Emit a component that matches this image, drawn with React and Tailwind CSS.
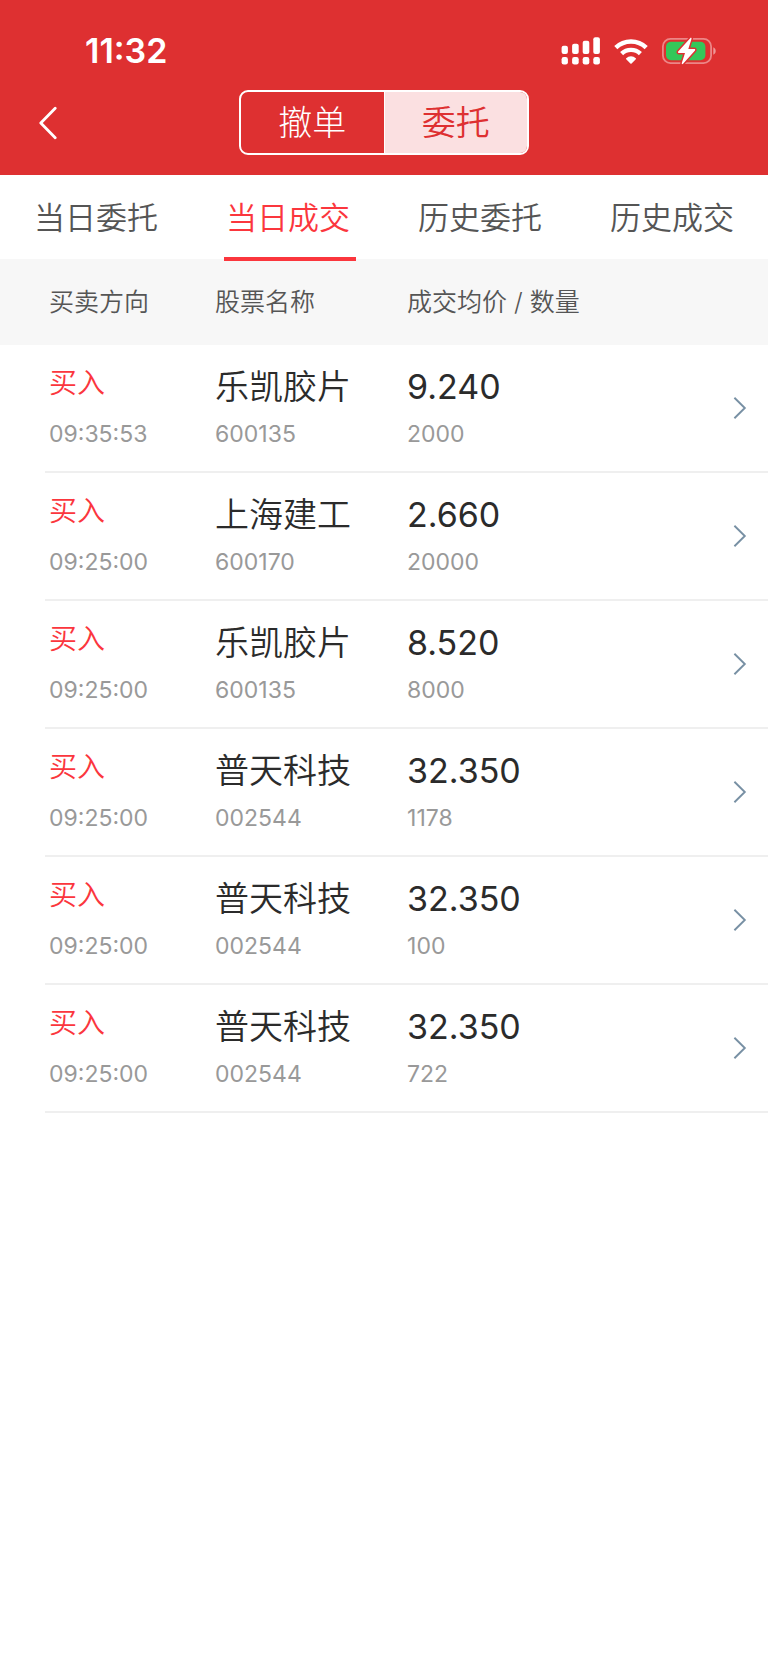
import { useState } from "react";

const TABS = ["当日委托", "当日成交", "历史委托", "历史成交"];

const TRADES = [
  { side: "买入", time: "09:35:53", name: "乐凯胶片", code: "600135", price: "9.240", qty: "2000" },
  { side: "买入", time: "09:25:00", name: "上海建工", code: "600170", price: "2.660", qty: "20000" },
  { side: "买入", time: "09:25:00", name: "乐凯胶片", code: "600135", price: "8.520", qty: "8000" },
  { side: "买入", time: "09:25:00", name: "普天科技", code: "002544", price: "32.350", qty: "1178" },
  { side: "买入", time: "09:25:00", name: "普天科技", code: "002544", price: "32.350", qty: "100" },
  { side: "买入", time: "09:25:00", name: "普天科技", code: "002544", price: "32.350", qty: "722" },
];

function SignalIcon() {
  return (
    <svg width="39" height="28" viewBox="0 0 39 28" fill="#fff" aria-hidden="true">
      <rect x="0.6" y="8.7" width="6.3" height="8.3" rx="2" />
      <rect x="11.1" y="6.7" width="6.6" height="10.3" rx="2" />
      <rect x="21.7" y="3.7" width="6.6" height="13.3" rx="2" />
      <rect x="32.3" y="0.3" width="6.6" height="16.7" rx="2" />
      <rect x="0.6" y="20" width="6.3" height="7.5" rx="2.2" />
      <rect x="11.1" y="20" width="6.6" height="7.5" rx="2.2" />
      <rect x="21.7" y="20" width="6.6" height="7.5" rx="2.2" />
      <rect x="32.3" y="20" width="6.6" height="7.5" rx="2.2" />
    </svg>
  );
}

function WifiIcon() {
  return (
    <svg width="34" height="26" viewBox="0 0 34 26" aria-hidden="true">
      <g fill="none" stroke="#fff" strokeWidth="4.4">
        <path d="M1.8 9.6a21.8 21.8 0 0 1 30.4 0" />
        <path d="M7.6 15.6a13.6 13.6 0 0 1 18.8 0" />
      </g>
      <path d="M12.2 20.2a7 7 0 0 1 9.6 0c.3.3.3.7 0 1l-4.2 4.2c-.4.3-.8.3-1.2 0l-4.2-4.2c-.3-.3-.3-.7 0-1Z" fill="#fff" />
    </svg>
  );
}

function BatteryIcon() {
  return (
    <svg width="54" height="28" viewBox="0 0 54 28" aria-hidden="true">
      <rect x="0.9" y="1.9" width="48.2" height="24.2" rx="7.6" fill="none" stroke="#fff" strokeOpacity="0.42" strokeWidth="1.8" />
      <path d="M51.3 10.3c1.5.7 2.4 2 2.4 3.7s-.9 3-2.4 3.7Z" fill="#fff" fillOpacity="0.5" />
      <rect x="4" y="4.8" width="39.4" height="18.4" rx="5" fill="#34c759" />
      <path
        d="M28.2 1.2 16.2 14.6c-.5.6-.2 1.3.6 1.3h6.2l-3.2 10.2c-.3 1 .6 1.4 1.3.7L33 13.4c.5-.6.2-1.3-.6-1.3h-6.1l3.2-10.2c.3-1-.6-1.4-1.3-.7Z"
        fill="#fff"
        stroke="#de3031"
        strokeWidth="3"
        paintOrder="stroke"
      />
    </svg>
  );
}

function Cell({ main, sub, mainClass }) {
  return (
    <td className="p-0">
      <div className="h-32 border-b-2 border-[#efefef] pt-5">
        <div className={`h-[42px] leading-11 ${mainClass}`}>{main}</div>
        <div className="mt-[11px] text-[23px] leading-8 text-[#999]">{sub}</div>
      </div>
    </td>
  );
}

export default function App() {
  const [mode, setMode] = useState("委托");
  const [tab, setTab] = useState("当日成交");

  return (
    <div className="min-h-screen bg-white font-['Inter','Noto_Sans_CJK_SC',sans-serif] text-[#2b2b2b]">
      <header className="bg-[#de3031] pb-5 text-white">
        <div className="flex h-[90px] items-center justify-between pt-3 pr-[52px] pl-[85px]">
          <span className="text-[34px] leading-10 font-semibold">11:32</span>
          <div className="flex items-center gap-[14px]">
            <SignalIcon />
            <WifiIcon />
            <BatteryIcon />
          </div>
        </div>
        <nav className="grid grid-cols-[1fr_auto_1fr] items-center">
          <button type="button" aria-label="返回" className="ml-8 flex h-12 w-8 items-center justify-center">
            <svg width="18" height="34" viewBox="0 0 18 34" fill="none" stroke="#fff" strokeWidth="2.8" strokeLinecap="round" strokeLinejoin="round">
              <path d="M16.2 2.2 1.8 17l14.4 14.8" />
            </svg>
          </button>
          <div className="flex h-[65px] w-[290px] overflow-hidden rounded-[9px] border-2 border-white">
            {["撤单", "委托"].map((m) => (
              <button
                key={m}
                type="button"
                aria-pressed={mode === m}
                onClick={() => setMode(m)}
                className={`flex-1 text-[34px] leading-10 ${
                  mode === m ? "bg-[#fbe0e1] font-[350] text-[#de3031]" : "border-r border-white font-light text-white"
                }`}
              >
                {m}
              </button>
            ))}
          </div>
        </nav>
      </header>

      <div role="tablist" className="grid h-[84px] grid-cols-4">
        {TABS.map((t) => (
          <button
            key={t}
            role="tab"
            type="button"
            aria-selected={tab === t}
            onClick={() => setTab(t)}
            className={`relative pt-0.5 text-[31px] leading-10 font-[350] ${tab === t ? "text-[#fb363d]" : "text-[#555]"}`}
          >
            {t}
            {tab === t && <span className="absolute right-7 -bottom-0.5 left-8 h-1 bg-[#fb363d]" />}
          </button>
        ))}
      </div>

      <table className="w-full table-fixed border-collapse text-left">
        <colgroup>
          <col className="w-[28%]" />
          <col className="w-[25%]" />
          <col />
          <col className="w-[10%]" />
        </colgroup>
        <thead className="bg-[#f7f7f7] text-[25px] text-[#555]">
          <tr className="h-[86px]">
            <th className="p-0 pt-0.5 pl-[49px] font-[350]">买卖方向</th>
            <th className="p-0 pt-0.5 font-[350]">股票名称</th>
            <th className="p-0 pt-0.5 font-[350]">成交均价 / 数量</th>
            <th className="p-0" aria-label="详情" />
          </tr>
        </thead>
        <tbody>
          {TRADES.map((r, i) => (
            <tr key={i}>
              <td className="p-0 pl-[45px]">
                <div className="h-32 border-b-2 border-[#efefef] pt-5 pl-1">
                  <div className="h-[42px] text-[28px] leading-9 font-[350] text-[#fb363d]">{r.side}</div>
                  <div className="mt-[11px] text-[23px] leading-8 text-[#999]">{r.time}</div>
                </div>
              </td>
              <Cell main={r.name} sub={r.code} mainClass="text-[34px] font-[350]" />
              <Cell main={r.price} sub={r.qty} mainClass="text-[34px]" />
              <td className="p-0">
                <div className="flex h-32 items-center justify-end border-b-2 border-[#efefef] pr-4">
                  <button type="button" aria-label={`${r.name} 详情`} className="flex h-12 w-6 items-center justify-center">
                    <svg width="14" height="24" viewBox="0 0 14 24" fill="none" stroke="#7890a4" strokeWidth="1.9">
                      <path d="M1.4 1.8 11.8 12 1.4 22.2" />
                    </svg>
                  </button>
                </div>
              </td>
            </tr>
          ))}
        </tbody>
      </table>
    </div>
  );
}
